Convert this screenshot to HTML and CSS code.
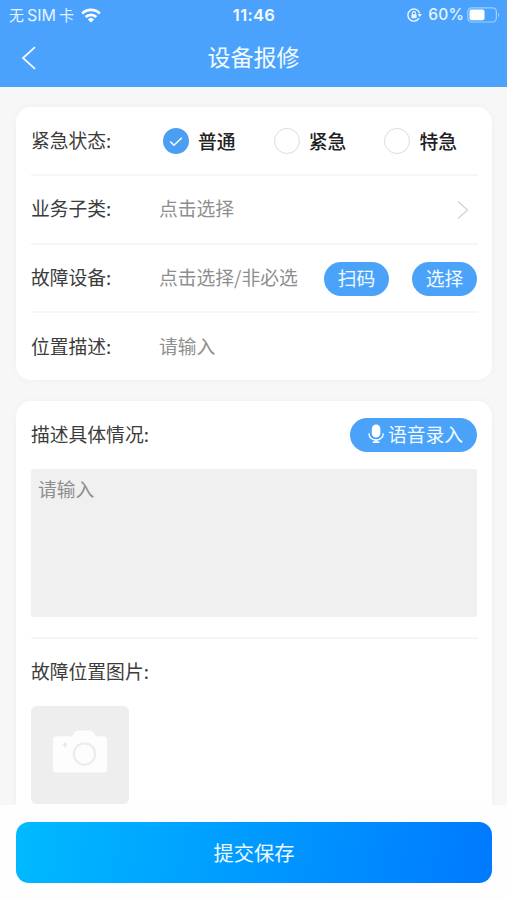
FILE: index.html
```html
<!DOCTYPE html>
<html lang="zh-CN">
<head>
<meta charset="utf-8">
<title>设备报修</title>
<link rel="stylesheet" href="styles.css">
</head>
<body>
<div class="app">
  <header class="header">
    <div class="status">
      <div class="status-left">
        <span class="carrier">无<span class="sim">SIM</span>卡</span>
        <svg class="wifi" width="20" height="15" viewBox="0 0 20 15" fill="none" stroke="#fff" stroke-width="2.6">
          <path d="M1.2 5.5a12.6 12.6 0 0 1 17.6 0"/>
          <path d="M4.6 9a7.8 7.8 0 0 1 10.8 0"/>
          <path d="M10 14.6L6.9 11.5a4.5 4.5 0 0 1 6.2 0z" fill="#fff" stroke="none"/>
        </svg>
      </div>
      <span class="time">11:46</span>
      <div class="status-right">
        <svg width="16" height="14" viewBox="0 0 16 14" fill="none" stroke="#e9f6ff" stroke-width="1.4">
          <path d="M12.1 10.1A6 6 0 1 1 12.6 5.2"/>
          <path d="M10.6 6h4.4l-2.2 3.1z" fill="#e9f6ff" stroke="none"/>
          <rect x="4.4" y="6.3" width="5.2" height="3.9" rx=".6" fill="#e9f6ff" stroke="none"/>
          <path d="M5.4 6.5V5.2a1.6 1.6 0 0 1 3.2 0v1.3" stroke-width="1.1"/>
        </svg>
        <span class="percent">60%</span>
        <svg width="33" height="16" viewBox="0 0 33 16" fill="none">
          <rect x=".8" y=".8" width="28.6" height="14.2" rx="4" stroke="#9dd0ff" stroke-width="1.2"/>
          <rect x="2.5" y="2.6" width="15" height="10.6" rx="2" fill="#fff"/>
          <path d="M31 5.6c1.6.8 1.6 3.8 0 4.6z" fill="#9dd0ff"/>
        </svg>
      </div>
    </div>
    <div class="nav">
      <svg class="back" width="16" height="24" viewBox="0 0 16 24" fill="none" stroke="#f4faff" stroke-width="1.8"><path d="M14 1.2L2 12l12 10.8"/></svg>
      <h1 class="title">设备报修</h1>
    </div>
  </header>

  <main class="content">
    <section class="card">
      <div class="row">
        <span class="label">紧急状态:</span>
        <div class="radios">
          <div class="radio"><span class="dot dot-on"><svg width="26" height="26" viewBox="0 0 26 26" fill="none" stroke="#fff" stroke-width="1.4"><path d="M7.2 13.5l3.7 3.8 8-7.6"/></svg></span><span class="radio-text">普通</span></div>
          <div class="radio"><span class="dot"></span><span class="radio-text">紧急</span></div>
          <div class="radio"><span class="dot"></span><span class="radio-text">特急</span></div>
        </div>
      </div>
      <div class="row">
        <span class="label">业务子类:</span>
        <span class="hint">点击选择</span>
        <svg class="arrow" width="12" height="20" viewBox="0 0 12 20" fill="none" stroke="#d2d2d2" stroke-width="1.3"><path d="M1 1.5L10.5 10 1 18.5"/></svg>
      </div>
      <div class="row">
        <span class="label">故障设备:</span>
        <span class="hint">点击选择/非必选</span>
        <div class="actions"><span class="pill">扫码</span><span class="pill">选择</span></div>
      </div>
      <div class="row">
        <span class="label">位置描述:</span>
        <span class="hint">请输入</span>
      </div>
    </section>

    <section class="card detail">
      <div class="detail-head">
        <span class="label">描述具体情况:</span>
        <span class="pill voice">
          <svg width="16" height="20" viewBox="0 0 16 20" fill="none">
            <rect x="3.8" y=".5" width="8.6" height="13" rx="4.3" fill="#fff"/>
            <path d="M1 9.2v.8a7.1 6 0 0 0 14.2 0v-.8" stroke="#fff" stroke-width="1.3"/>
            <path d="M8.1 15.5v3M4.8 18.2h6.6" stroke="#fff" stroke-width="1.7"/>
          </svg>语音录入</span>
      </div>
      <div class="textarea">请输入</div>
      <div class="photos">
        <span class="label">故障位置图片:</span>
        <div class="upload">
          <svg width="54" height="44" viewBox="0 0 54 44">
            <path d="M3.5 6.2H19l2.7-4Q23 .5 25 .5h12q2 0 3.300 1.700l2.700 4h7.500q3.500 0 3.500 3.500V39q0 3.500-3.500 3.500h-47Q0 42.500 0 39V9.700q0-3.500 3.500-3.500z" fill="#fdfdfd"/>
            <circle cx="31.500" cy="24" r="10.700" fill="none" stroke="#ececec" stroke-width="2.200"/>
            <path d="M12 11.500l1 2.500 2 .8-2 .8-1 2.600-1-2.600-2-.8 2-.8z" fill="#e6e6e6"/>
          </svg>
        </div>
      </div>
    </section>
  </main>

  <footer class="footer"><div class="submit">提交保存</div></footer>
</div>
</body>
</html>
```
FILE: styles.css
```css
* { box-sizing: border-box; }

body {
  margin: 0;
  font-family: "Noto Sans CJK SC", sans-serif;
  font-size: 18.8px;
  color: #3c3c3c;
}

.app {
  height: 900px;
  display: flex;
  flex-direction: column;
  overflow: hidden;
  background: #f7f7f8;
}

.header {
  flex: none;
  height: 87px;
  background: #4ba2fd;
  color: #f4faff;
}

.status {
  height: 29px;
  padding: 0 8px 0 9px;
  display: grid;
  grid-template-columns: 1fr auto 1fr;
  align-items: center;
  line-height: 28px;
  font-size: 15px;
}

.status-left, .status-right { display: flex; align-items: center; }
.status-left { gap: 7px; color: #e4f4ff; }
.status-right { justify-content: flex-end; gap: 5px; color: #e4f4ff; }
.carrier { display: flex; gap: 3px; }
.sim { font: 16px/28px Inter, sans-serif; }
.time { font: 600 16.500px/28px Inter, sans-serif; letter-spacing: .3px; }
.percent { font: 500 15.500px/30px Inter, sans-serif; letter-spacing: .2px; }
.status-right svg:last-child { margin: 0 -1px 0 -2px; }

.nav {
  height: 58px;
  display: grid;
  grid-template-columns: 60px 1fr 60px;
  align-items: center;
}

.back { margin-left: 21px; }

.title {
  margin: 0;
  text-align: center;
  font-size: 23px;
  font-weight: 400;
  line-height: 54px;
  padding-bottom: 4px;
}

.content {
  flex: 1;
  min-height: 0;
  overflow: hidden;
  padding: 20px 15px 0 16px;
  display: flex;
  flex-direction: column;
  gap: 21px;
}

.card {
  flex: none;
  padding: 0 14px 0 15px;
  border-radius: 15px;
  background: #fff;
  box-shadow: 0 0 8px rgba(0, 0, 0, .035);
}

.row {
  height: 68.500px;
  display: flex;
  align-items: center;
  border-bottom: 2px solid #f6f6f6;
}

.row:first-child { height: 69px; }
.row:last-child { border-bottom: 0; height: 67px; }

.label { flex: none; white-space: nowrap; padding-bottom: 3px; }
.row .label { width: 128px; }
.hint { color: #8e8e8e; white-space: nowrap; padding-bottom: 3px; }
.arrow { margin: 2px 9px 0 auto; }

.radios { display: flex; margin-left: 4px; color: #222; font-weight: 500; }
.radio { width: 110.700px; display: flex; align-items: center; gap: 9px; white-space: nowrap; }
.radio:last-child { width: auto; }
.radio-text { padding-bottom: 1px; }

.dot {
  width: 26px;
  height: 26px;
  border: 1.500px solid #ddd;
  border-radius: 50%;
}

.dot-on { border: 0; background: #4b9ff3; }
.dot svg { display: block; }

.actions { display: flex; gap: 23px; margin: 2px 1px 0 auto; }

.pill {
  width: 65px;
  height: 34px;
  display: flex;
  align-items: center;
  justify-content: center;
  border-radius: 17px;
  background: #4ba2f9;
  color: #f1faff;
  line-height: 32px;
  padding-bottom: 1px;
}

.detail { height: 440px; }

.detail-head {
  height: 68px;
  display: flex;
  align-items: center;
  justify-content: space-between;
}

.detail-head .label { padding-bottom: 4px; }

.voice { width: 127px; gap: 4px; padding: 0 0 2px 4px; margin-right: 1px; }

.textarea {
  height: 148px;
  margin-right: 1px;
  padding: 6px 7px;
  border-radius: 3px;
  background: #f0f0f0;
  color: #8e8e8e;
  line-height: 28px;
}

.photos {
  margin-top: 20px;
  padding-top: 18px;
  border-top: 2px solid #f6f6f6;
  display: flex;
  flex-direction: column;
  gap: 18px;
  line-height: 28px;
}

.upload {
  width: 98px;
  height: 98px;
  display: flex;
  align-items: center;
  justify-content: center;
  border-radius: 6px;
  background: #eee;
}

.upload svg { margin-top: -6px; }

.footer {
  flex: none;
  height: 95px;
  padding: 17px 15px 0 16px;
  background: #fefefe;
}

.submit {
  height: 61px;
  border-radius: 13px;
  background: linear-gradient(100deg, #00baff, #0079ff);
  color: #edf8ff;
  font-size: 20.300px;
  line-height: 60px;
  text-align: center;
}
```
